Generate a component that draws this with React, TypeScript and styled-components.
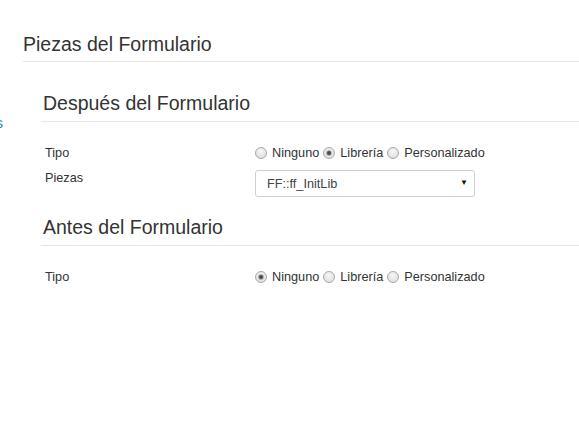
import React from "react";
import styled, { createGlobalStyle } from "styled-components";

const Global = createGlobalStyle`
  html, body { margin: 0; padding: 0; background: #fff; }
  body { font-family: "Liberation Sans", Arial, sans-serif; color: #333; overflow: hidden; }
`;

const Page = styled.div`
  display: flex;
  width: 579px;
  height: 437px;
  overflow: hidden;
`;

const Side = styled.nav`
  flex: 0 0 3px;
  overflow: hidden;
  direction: rtl;
  white-space: nowrap;
  padding-top: 114px;
  font-size: 15px;
  line-height: 18px;
  color: #2a8ec0;
`;

const Main = styled.main`
  flex: 1;
  padding-left: 20px;
  min-width: 0;
`;

const PageTitle = styled.h2`
  margin: 34px 0 0 0;
  font-size: 19.5px;
  font-weight: normal;
  line-height: 20px;
  padding-bottom: 7px;
  border-bottom: 1px solid #e5e5e5;
  margin-right: -20px;
`;

const Section = styled.section`
  padding-left: 18px;
`;

const SectionTitle = styled.h3<{ $top: number }>`
  margin: ${(p) => p.$top}px -20px 0 0;
  padding-left: 2px;
  font-size: 19.5px;
  font-weight: normal;
  line-height: 22px;
  padding-bottom: 7px;
  border-bottom: 1px solid #e5e5e5;
`;

const Row = styled.div<{ $top: number }>`
  display: grid;
  grid-template-columns: 214px auto;
  align-items: start;
  margin-top: ${(p) => p.$top}px;
  font-size: 12.7px;
`;

const Label = styled.label<{ $lh: number }>`
  padding-left: 4px;
  line-height: ${(p) => p.$lh}px;
`;

const Radios = styled.div`
  display: flex;
  align-items: center;
  height: 20px;
`;

const RadioLabel = styled.label`
  display: flex;
  align-items: center;
  margin-right: 4px;
  color: #333;
`;

const Radio = styled.input.attrs({ type: "radio" })`
  appearance: none;
  margin: 0 5px 0 0;
  width: 12px;
  height: 12px;
  border-radius: 50%;
  border: 1px solid #a9a9a9;
  background: radial-gradient(circle at 50% 35%, #f7f7f7 0%, #e2e2e2 70%, #d6d6d6 100%);
  box-sizing: border-box;
  display: grid;
  place-items: center;
  &:checked::after {
    content: "";
    width: 4px;
    height: 4px;
    border-radius: 50%;
    background: #4a4a4a;
    box-shadow: 0 0 0 1px rgba(74, 74, 74, 0.35);
  }
`;

const SelectWrap = styled.div`
  position: relative;
  width: 220px;
  height: 27px;
`;

const Select = styled.select`
  appearance: none;
  width: 100%;
  height: 100%;
  border: 1px solid #cfcfcf;
  border-radius: 3px;
  background: #fff;
  padding: 0 0 0 11px;
  font-family: "Liberation Sans", Arial, sans-serif;
  font-size: 12.7px;
  color: #444;
  box-sizing: border-box;
  outline: none;
`;

const Arrow = styled.span`
  position: absolute;
  right: 7px;
  top: 8px;
  font-size: 8px;
  line-height: 10px;
  color: #111;
  pointer-events: none;
`;

function TypeRadios({ name, value }: { name: string; value: string }) {
  const opts = ["Ninguno", "Librería", "Personalizado"];
  return (
    <Radios>
      {opts.map((o) => (
        <RadioLabel key={o}>
          <Radio name={name} defaultChecked={o === value} />
          {o}
        </RadioLabel>
      ))}
    </Radios>
  );
}

export default function App() {
  return (
    <>
      <Global />
      <Page>
        <Side>Acciones</Side>
        <Main>
          <PageTitle>Piezas del Formulario</PageTitle>
          <Section>
            <SectionTitle $top={30}>Después del Formulario</SectionTitle>
            <Row $top={21}>
              <Label $lh={20}>Tipo</Label>
              <TypeRadios name="after" value="Librería" />
            </Row>
            <Row $top={7}>
              <Label $lh={16}>Piezas</Label>
              <SelectWrap>
                <Select defaultValue="FF::ff_InitLib">
                  <option>FF::ff_InitLib</option>
                </Select>
                <Arrow>▼</Arrow>
              </SelectWrap>
            </Row>
            <SectionTitle $top={19}>Antes del Formulario</SectionTitle>
            <Row $top={21}>
              <Label $lh={20}>Tipo</Label>
              <TypeRadios name="before" value="Ninguno" />
            </Row>
          </Section>
        </Main>
      </Page>
    </>
  );
}
